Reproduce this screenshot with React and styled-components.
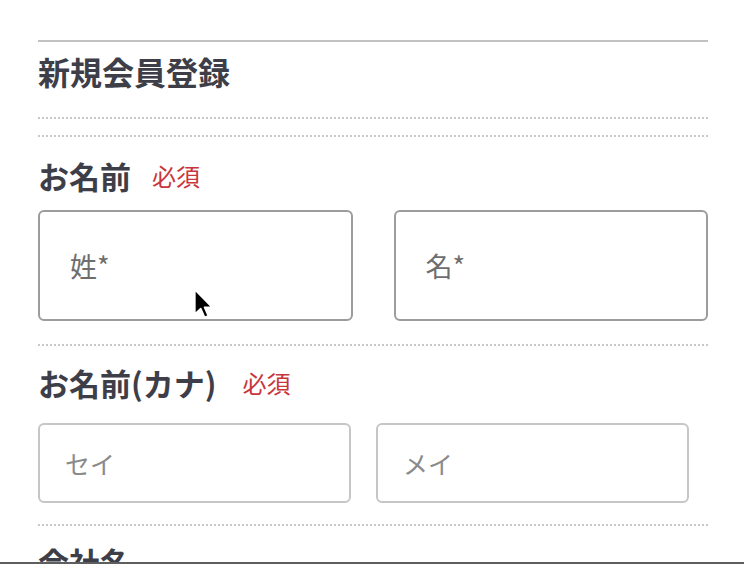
import React from "react";
import styled, { createGlobalStyle } from "styled-components";

const Global = createGlobalStyle`
  html, body { margin: 0; padding: 0; background: #fff; }
  body { font-family: "Noto Sans CJK JP", "Noto Sans", sans-serif; overflow: hidden; }
  * { box-sizing: border-box; }
`;

const Page = styled.div`
  position: relative;
  padding: 40px 36px 0 38px;
  height: 564px;
  overflow: hidden;
`;

const Header = styled.div`
  border-top: 2px solid #c2c2c2;
  border-bottom: 2px dotted #c8c8c8;
  padding: 13px 0 30px;
  margin-bottom: 16px;
`;

const Title = styled.h1`
  margin: 0;
  font-size: 32px;
  line-height: 1;
  font-weight: 700;
  color: #3e3e48;
`;

const Section = styled.section`
  border-top: 2px dotted #c8c8c8;
  padding: ${(p) => p.$pt}px 0 ${(p) => p.$pb}px;
`;

const LabelRow = styled.div`
  display: flex;
  align-items: center;
  gap: ${(p) => p.$gap || 21}px;
  margin-bottom: ${(p) => p.$mb}px;
`;

const Label = styled.span`
  font-size: 31px;
  line-height: 1;
  font-weight: 700;
  color: #3e3e48;
`;

const Required = styled.span`
  font-size: 24px;
  line-height: 1;
  color: #c8363c;
`;

const Fields = styled.div`
  display: grid;
  grid-template-columns: ${(p) => p.$cols};
  gap: ${(p) => p.$gap}px;
`;

const Field = styled.input`
  display: block;
  width: 100%;
  height: ${(p) => p.$h}px;
  border: 2px solid ${(p) => p.$border};
  border-radius: 6px;
  padding: 0 0 0 ${(p) => p.$px}px;
  font-family: "Noto Sans CJK JP", "Noto Sans", sans-serif;
  font-size: ${(p) => p.$fs}px;
  color: #333;
  background: #fff;
  outline: none;
  &::placeholder { color: ${(p) => p.$ph}; opacity: 1; }
`;

const BottomBar = styled.div`
  position: fixed;
  left: 0;
  right: 0;
  bottom: 0;
  height: 2px;
  background: #5e5e5e;
`;

const Cursor = styled.svg`
  position: absolute;
  left: 193px;
  top: 288px;
  width: 20px;
  height: 31px;
  pointer-events: none;
`;

export default function App() {
  return (
    <>
      <Global />
      <Page>
        <Header>
          <Title>新規会員登録</Title>
        </Header>

        <Section $pt={23} $pb={23}>
          <LabelRow $mb={19}>
            <Label>お名前</Label>
            <Required>必須</Required>
          </LabelRow>
          <Fields $cols="1fr 1fr" $gap={41}>
            <Field $h={111} $border="#9c9c9c" $px={30} $fs={27} $ph="#6e6e6e" placeholder="姓*" />
            <Field $h={111} $border="#9c9c9c" $px={30} $fs={27} $ph="#6e6e6e" placeholder="名*" />
          </Fields>
        </Section>

        <Section $pt={21} $pb={21}>
          <LabelRow $mb={25} $gap={26}>
            <Label>お名前(カナ)</Label>
            <Required>必須</Required>
          </LabelRow>
          <Fields $cols="313px 313px" $gap={25}>
            <Field $h={80} $border="#c6c6c6" $px={25} $fs={25} $ph="#8a8a8a" placeholder="セイ" />
            <Field $h={80} $border="#c6c6c6" $px={25} $fs={25} $ph="#8a8a8a" placeholder="メイ" />
          </Fields>
        </Section>

        <Section $pt={20} $pb={20}>
          <LabelRow $mb={15}>
            <Label>会社名</Label>
          </LabelRow>
        </Section>

        <Cursor viewBox="0 0 12 19">
          <path d="M1 1 L1 16 L4.6 12.6 L7 18 L9.2 17 L6.9 11.8 L11.5 11.8 Z" fill="#000" stroke="#fff" strokeWidth="1" strokeLinejoin="round" />
        </Cursor>
      </Page>
      <BottomBar />
    </>
  );
}
